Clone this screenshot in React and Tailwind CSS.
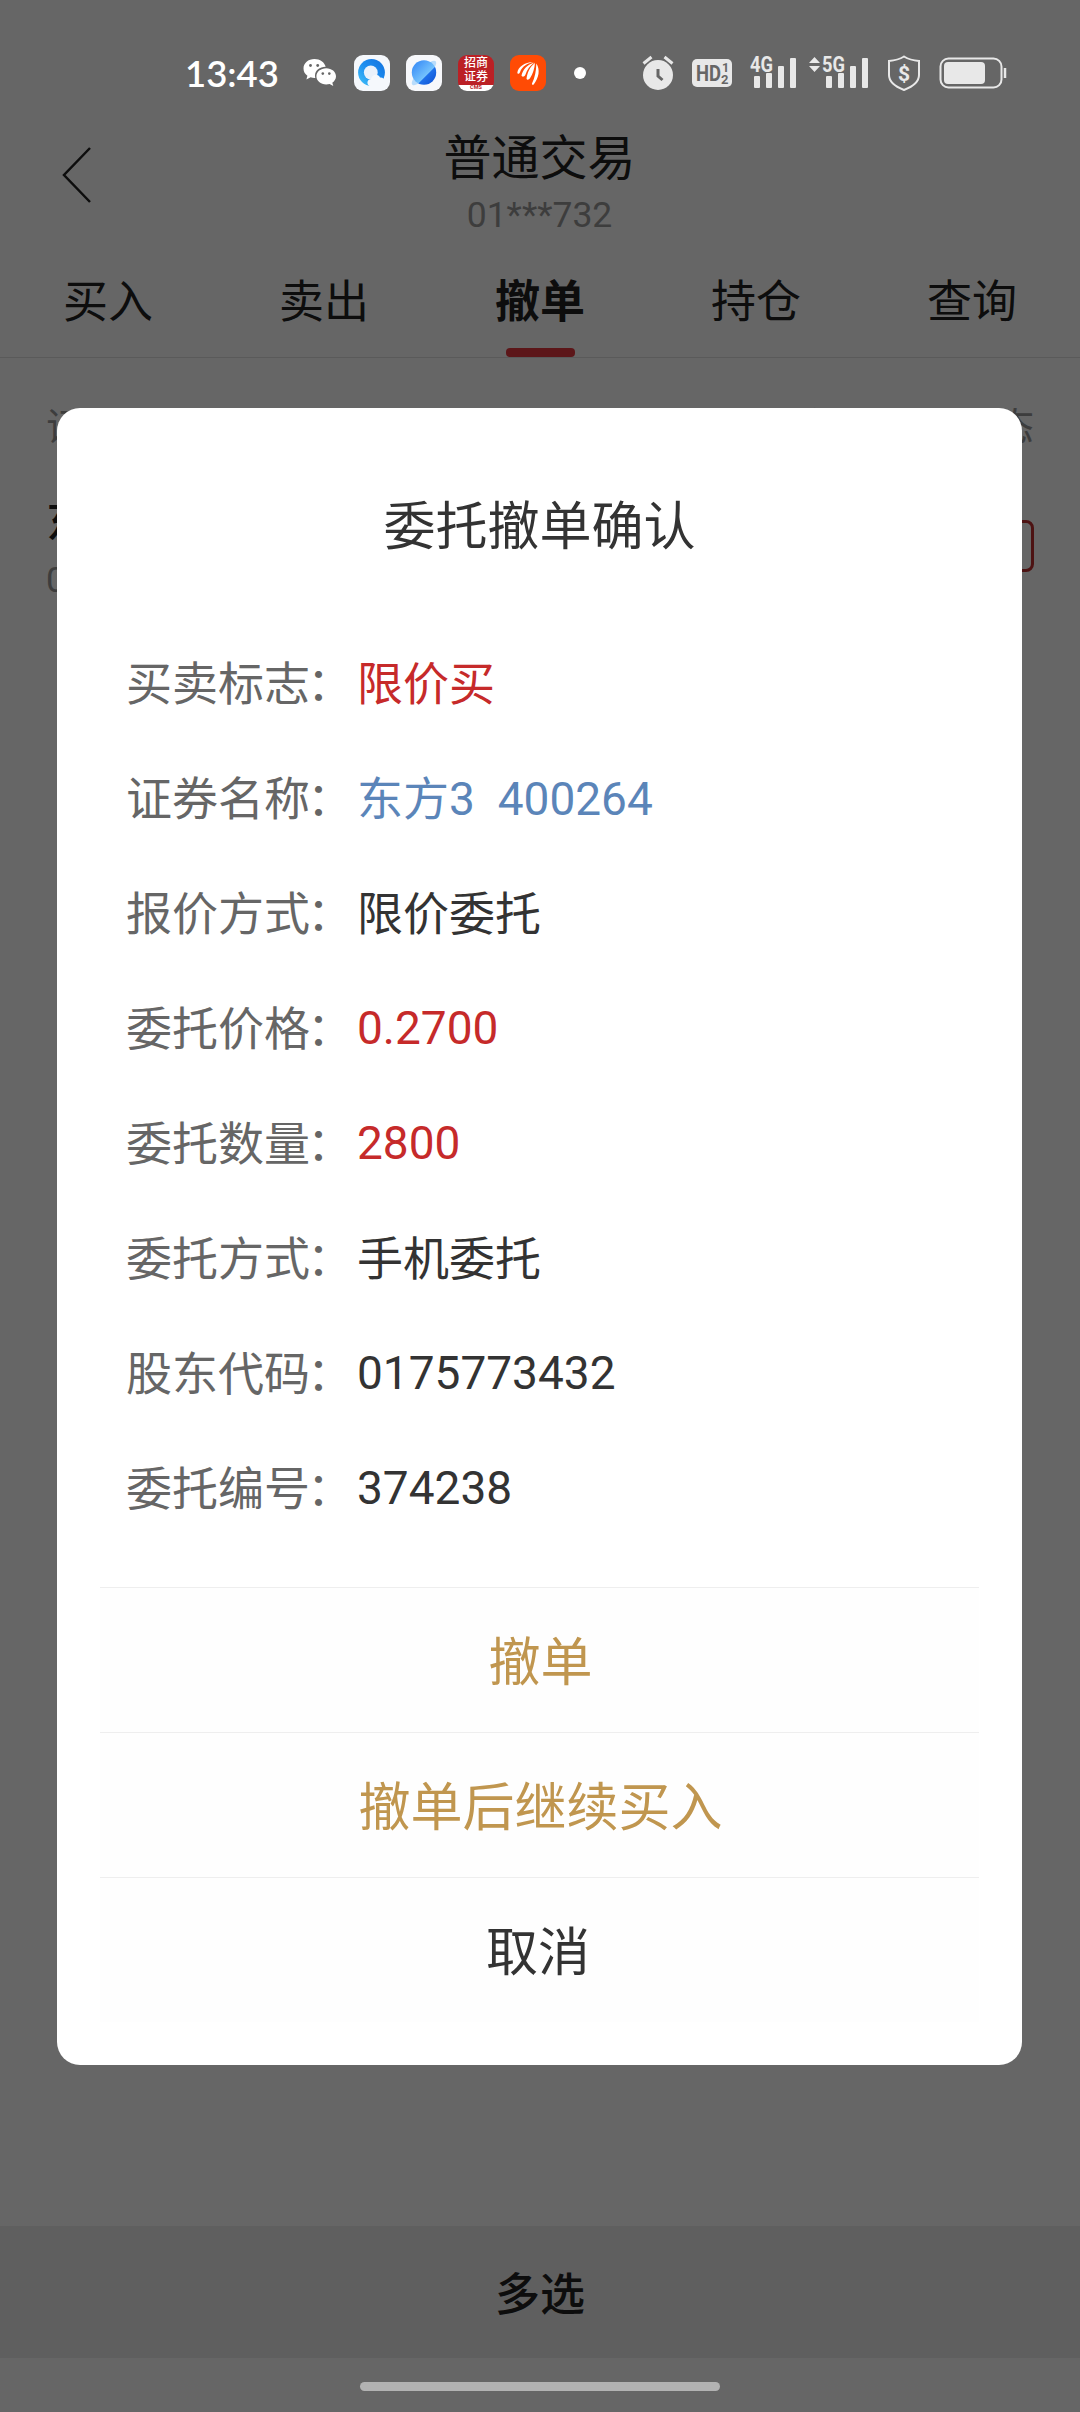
import React from 'react';

const tabs = ['买入', '卖出', '撤单', '持仓', '查询'];

const columns = ['证券/时间', '委托价/均价', '委托/成交', '状态'];

const details = [
    { label: '买卖标志', value: '限价买', color: 'text-[#c62a2a]' },
    { label: '证券名称', value: '东方3  400264', color: 'text-[#5b85b9]' },
    { label: '报价方式', value: '限价委托', color: 'text-[#333333]' },
    { label: '委托价格', value: '0.2700', color: 'text-[#c62a2a] pb-0.5' },
    { label: '委托数量', value: '2800', color: 'text-[#c62a2a] pb-0.5' },
    { label: '委托方式', value: '手机委托', color: 'text-[#333333]' },
    { label: '股东代码', value: '0175773432', color: 'text-[#333333] pb-0.5' },
    { label: '委托编号', value: '374238', color: 'text-[#333333] pb-0.5' },
];

const actions = [
    { label: '撤单', color: 'text-[#c0964f] pl-0.5' },
    { label: '撤单后继续买入', color: 'text-[#c0964f] pl-0.5' },
    { label: '取消', color: 'text-[#333333] pr-[3px]' },
];

function WechatIcon() {
    return (
        <svg width="34" height="30" viewBox="0 0 34 30" className="ml-[25px]">
            <path fill="#fff" d="M11.500 1C5.200 1 .5 5.200.5 10.500c0 3 1.500 5.600 3.900 7.300l-1 3.700 4.200-2.200c1.300.4 2.600.6 3.900.6h.8a9 9 0 0 1-.3-2.200c0-5.200 4.800-8.900 10.400-8.900h.3C21.600 4.300 17 1 11.500 1Z" />
            <path fill="#fff" d="M33 18.300c0-4.500-4.300-8.100-9.800-8.100s-9.800 3.600-9.800 8.100 4.300 8.100 9.800 8.100c1.200 0 2.400-.2 3.400-.5l3.700 2.200-1-3.400c2.300-1.500 3.700-3.800 3.700-6.400Z" />
            <circle cx="7.500" cy="7.500" r="1.400" fill="#666" />
            <circle cx="14.700" cy="7.500" r="1.400" fill="#666" />
            <circle cx="19.800" cy="15.600" r="1.300" fill="#666" />
            <circle cx="26.300" cy="15.600" r="1.300" fill="#666" />
        </svg>
    );
}

function BrowserIcon() {
    return (
        <svg width="36" height="36" viewBox="0 0 36 36" className="ml-[17px]">
            <defs>
                <linearGradient id="ring" x1="0" y1="1" x2="1" y2="0">
                    <stop offset="0" stopColor="#45c4f8" />
                    <stop offset=".5" stopColor="#1b8df0" />
                    <stop offset="1" stopColor="#1572dd" />
                </linearGradient>
            </defs>
            <rect width="36" height="36" rx="9" fill="#f5f8fc" />
            <circle cx="17.500" cy="17.500" r="13.400" fill="url(#ring)" />
            <circle cx="16.800" cy="17.500" r="6.900" fill="#e9f1fb" />
            <path fill="#f5f8fc" d="M17 31.500c-4.500-.5-5-7 0-7.500.5-5 7.500-6 9-1.500 5.500-.5 7.500 7 2 9Z" />
        </svg>
    );
}

function PlanetIcon() {
    return (
        <svg width="36" height="36" viewBox="0 0 36 36" className="ml-4">
            <defs>
                <linearGradient id="planet" x1="0" y1="0" x2="1" y2="1">
                    <stop offset="0" stopColor="#2f83f5" />
                    <stop offset=".6" stopColor="#74c2fd" />
                    <stop offset=".62" stopColor="#1f70ea" />
                    <stop offset="1" stopColor="#0d4fd0" />
                </linearGradient>
            </defs>
            <rect width="36" height="36" rx="9" fill="#f7f8fb" />
            <ellipse cx="18" cy="18" rx="16.500" ry="5" fill="#b9dcfb" transform="rotate(-45 18 18)" />
            <circle cx="18" cy="17.500" r="12.200" fill="url(#planet)" />
        </svg>
    );
}

function CmsIcon() {
    return (
        <div className="ml-4 flex h-9 w-9 flex-col items-center rounded-[9px] bg-linear-to-b from-[#bb2025] from-83% to-white to-83% text-center text-[12px] font-medium text-white">
            <span className="mt-[2px] h-[13px] leading-[13px]">招商</span>
            <span className="h-[14px] leading-[14px]">证券</span>
            <span className="h-[7px] text-[5.500px] leading-[7px] font-bold text-[#bb2025]">CMS</span>
        </div>
    );
}

function FeatherIcon() {
    return (
        <svg width="36" height="36" viewBox="0 0 36 36" className="ml-4">
            <rect width="36" height="36" rx="9" fill="#ff4b05" />
            <g fill="#fff">
                <path d="M7.300 18C8 12 14 7.500 23.500 7c-5.500 1.200-11.500 4-13.500 10.300-.8 1.700-2.400 2-2.700.7Z" />
                <path d="M11.500 20.500C13 14.500 17 9.500 24.500 7.500c-4.500 3-7.500 7-9.200 12.500-1 1.800-3.300 2.300-3.800.5Z" />
                <path d="M16.500 23.800C17.500 17 20 11.500 25 8c-.5 5.500-2 10.800-5 15.200-1 1.600-3 2-3.500.6Z" />
                <path d="M26.300 8.500c4 6 2.800 14-2.600 21-1 .6-2 .2-1.700-1 2.800-6 4.300-12.500 4.300-20Z" />
            </g>
        </svg>
    );
}

function AlarmIcon() {
    return (
        <svg width="32" height="36" viewBox="0 0 32 36">
            <circle cx="16" cy="20" r="15" fill="#e8e8e8" />
            <path d="M1.500 8.500 9.500 2M30.500 8.500 22.500 2" stroke="#e8e8e8" strokeWidth="3" />
            <path d="M16 14v7l4.500 4" stroke="#666" strokeWidth="3" fill="none" />
        </svg>
    );
}

function HdIcon() {
    return (
        <svg width="40" height="28" viewBox="0 0 40 28" className="ml-[18px]" fontWeight="700" fill="#666">
            <rect width="40" height="28" rx="5" fill="#e8e8e8" />
            <text x="4" y="22" fontSize="22.500" textLength="25" lengthAdjust="spacingAndGlyphs">HD</text>
            <text x="30" y="13" fontSize="12.500">1</text>
            <text x="29" y="24.500" fontSize="13">2</text>
        </svg>
    );
}

function Signal({ label, arrows }) {
    return (
        <svg width={arrows ? 60 : 47} height="34" viewBox={arrows ? '-13 0 60 34' : '0 0 47 34'} className={arrows ? 'ml-3' : 'ml-[18px]'} fill="#e8e8e8">
            {arrows && <path d="m-13 7 5.500-6L-2 7Zm0 3 5.500 6L-2 10Z" />}
            <text x="0" y="15.500" textLength="23" lengthAdjust="spacingAndGlyphs" fontSize="21.500" fontWeight="700">{label}</text>
            <rect x="4" y="20" width="6" height="12" rx="1" />
            <rect x="16" y="17" width="6" height="15" rx="1" />
            <rect x="28" y="10" width="6" height="22" rx="1" />
            <rect x="40" y="2" width="6" height="30" rx="1" />
        </svg>
    );
}

function ShieldIcon() {
    return (
        <svg width="34" height="36" viewBox="0 0 34 36" className="ml-[18px]">
            <path d="M17 1.500c4 2.500 9 4 15 4.500v14c0 6.500-6 11.500-15 15-9-3.500-15-8.500-15-15V6c6-.5 11-2 15-4.500Z" fill="none" stroke="#e8e8e8" strokeWidth="2" />
            <text x="17" y="25.500" textAnchor="middle" fontSize="21" fontWeight="700" fill="#e8e8e8">$</text>
        </svg>
    );
}

function BatteryIcon() {
    return (
        <svg width="68" height="32" viewBox="0 0 68 32" className="ml-[18px]">
            <rect x="1.500" y="1.500" width="61" height="29" rx="8" fill="none" stroke="#e8e8e8" strokeWidth="2" />
            <rect x="5" y="5" width="41" height="22" rx="4" fill="#e8e8e8" />
            <path d="M66 11v10" stroke="#e8e8e8" strokeWidth="2.500" />
        </svg>
    );
}

function StatusBar() {
    return (
        <div className="relative z-20 flex h-[113px] items-center pt-[33px]">
            <div className="ml-[185px] w-[93px] font-['Lato','Noto_Sans_CJK_SC',sans-serif] text-[36.500px] leading-9 font-semibold whitespace-nowrap text-white">
                13:43
            </div>
            <WechatIcon />
            <BrowserIcon />
            <PlanetIcon />
            <CmsIcon />
            <FeatherIcon />
            <div className="ml-7 h-3 w-3 rounded-full bg-white"></div>
            <div className="ml-[56px] flex items-center">
                <AlarmIcon />
                <HdIcon />
                <Signal label="4G" />
                <Signal label="5G" arrows />
                <ShieldIcon />
                <BatteryIcon />
            </div>
        </div>
    );
}

function Header() {
    return (
        <div className="flex h-[141px] px-[60px]">
            <svg width="34" height="60" viewBox="0 0 34 60" className="mt-8" fill="none" stroke="#222" strokeWidth="2.500">
                <path d="M30 3 4 30l26 27" />
            </svg>
            <div className="flex flex-1 flex-col items-center pr-[35px]">
                <div className="mt-[20px] text-[48px] leading-[52px] text-[#222]">普通交易</div>
                <div className="mt-[10px] text-[35.500px] leading-10 text-[#999]">01***732</div>
            </div>
        </div>
    );
}

function ConfirmDialog() {
    return (
        <div className="absolute inset-0 z-10 bg-black/60 px-[57px] pt-[408px]">
            <div className="flex h-[1657px] w-[965px] flex-col rounded-[23px] bg-white">
                <h1 className="mt-[86px] text-center text-[52px] leading-[68px] text-[#333]">委托撤单确认</h1>
                <div className="mt-[64px] ml-[69px]">
                    {details.map(item => (
                        <div key={item.label} className="flex h-[115px] items-center text-[46px] leading-[60px]">
                            <div className="w-[231px] text-[#666]">
                                {item.label}
                                <span className="-ml-[3px]">：</span>
                            </div>
                            <div className={`whitespace-pre ${item.color}`}>{item.value}</div>
                        </div>
                    ))}
                </div>
                <div className="mx-[43px] mt-[41px]">
                    {actions.map(action => (
                        <button
                            key={action.label}
                            className={`block h-[145px] w-full border-t border-[#eeeeee] bg-[#fefefe] pt-2 text-[52px] ${action.color}`}
                        >
                            {action.label}
                        </button>
                    ))}
                </div>
            </div>
        </div>
    );
}

export default function App() {
    return (
        <div className="relative flex h-[2412px] w-[1080px] flex-col overflow-hidden bg-white font-['Roboto','Noto_Sans_CJK_SC',sans-serif]">
            <StatusBar />
            <Header />

            <div className="flex h-[104px] border-b border-[#e0e0e0] text-[45px] leading-[60px] text-[#222]">
                {tabs.map(tab => (
                    <div key={tab} className="flex flex-1 flex-col items-center justify-between pt-[19px]">
                        <span className={tab === '撤单' ? 'font-bold' : ''}>{tab}</span>
                        {tab === '撤单' && <div className="h-[9px] w-[69px] rounded-[4px] bg-[#e6393f]"></div>}
                    </div>
                ))}
            </div>

            <div className="mt-[47px] flex justify-between px-[46px] text-[38px] leading-[44px] text-[#999]">
                {columns.map(col => (
                    <span key={col}>{col}</span>
                ))}
            </div>

            <div className="mt-[46px] flex items-start justify-between px-[46px]">
                <div>
                    <div className="text-[45px] leading-[56px] font-medium text-[#222]">东方3</div>
                    <div className="mt-1 text-[35.500px] leading-[50px] text-[#999]">09:15:00</div>
                </div>
                <div className="mt-[25px] flex h-[52px] w-[110px] items-center justify-center rounded-[8px] border-3 border-[#c03030] text-[32px] text-[#c03030]">撤单</div>
            </div>

            <div className="mt-auto flex h-[132px] items-center justify-center bg-[#ededed] pt-2 text-[45px] font-medium text-[#222]">多选</div>
            <div className="relative z-20 flex h-[54px] justify-center pt-6">
                <div className="h-[9px] w-[360px] rounded-full bg-[#b2b2b2]"></div>
            </div>

            <ConfirmDialog />
        </div>
    );
}
